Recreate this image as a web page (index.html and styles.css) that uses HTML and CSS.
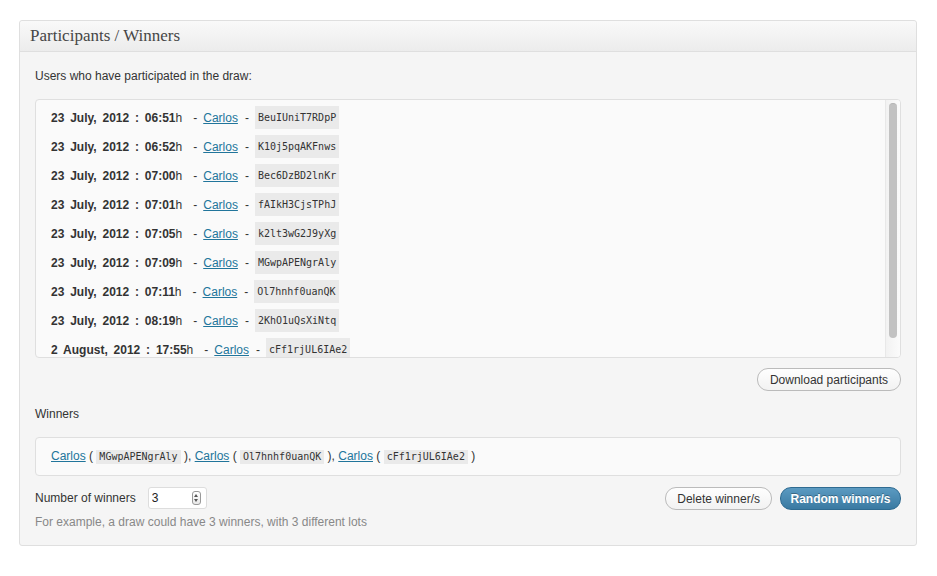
FILE: index.html
```html
<!DOCTYPE html>
<html lang="en">
<head>
    <meta charset="UTF-8">
    <meta name="viewport" content="width=device-width, initial-scale=1.0">
    <title>Participants / Winners</title>
    <link rel="stylesheet" href="styles.css">
</head>
<body>
    <div class="postbox">
        <h3 class="hndle">Participants / Winners</h3>
        <div class="inside">
            <p class="intro">Users who have participated in the draw:</p>

            <!-- participants list, with its own scrollbar -->
            <div class="participants">
                <div class="list">
                    <div class="entry"><strong>23 July, 2012 : 06:51</strong>h<span class="sep">-</span><a href="#">Carlos</a><span class="sep">-</span><code>BeuIUniT7RDpP</code></div>
                    <div class="entry"><strong>23 July, 2012 : 06:52</strong>h<span class="sep">-</span><a href="#">Carlos</a><span class="sep">-</span><code>K10j5pqAKFnws</code></div>
                    <div class="entry"><strong>23 July, 2012 : 07:00</strong>h<span class="sep">-</span><a href="#">Carlos</a><span class="sep">-</span><code>Bec6DzBD2lnKr</code></div>
                    <div class="entry"><strong>23 July, 2012 : 07:01</strong>h<span class="sep">-</span><a href="#">Carlos</a><span class="sep">-</span><code>fAIkH3CjsTPhJ</code></div>
                    <div class="entry"><strong>23 July, 2012 : 07:05</strong>h<span class="sep">-</span><a href="#">Carlos</a><span class="sep">-</span><code>k2lt3wG2J9yXg</code></div>
                    <div class="entry"><strong>23 July, 2012 : 07:09</strong>h<span class="sep">-</span><a href="#">Carlos</a><span class="sep">-</span><code>MGwpAPENgrAly</code></div>
                    <div class="entry"><strong>23 July, 2012 : 07:11</strong>h<span class="sep">-</span><a href="#">Carlos</a><span class="sep">-</span><code>Ol7hnhf0uanQK</code></div>
                    <div class="entry"><strong>23 July, 2012 : 08:19</strong>h<span class="sep">-</span><a href="#">Carlos</a><span class="sep">-</span><code>2KhO1uQsXiNtq</code></div>
                    <div class="entry"><strong>2 August, 2012 : 17:55</strong>h<span class="sep">-</span><a href="#">Carlos</a><span class="sep">-</span><code>cFf1rjUL6IAe2</code></div>
                </div>
                <div class="scrollbar"><div class="thumb"></div></div>
            </div>

            <div class="actions">
                <button type="button" class="button">Download participants</button>
            </div>

            <!-- winners -->
            <p class="label">Winners</p>
            <div class="winners">
                <a href="#">Carlos</a> ( <code>MGwpAPENgrAly</code> ), <a href="#">Carlos</a> ( <code>Ol7hnhf0uanQK</code> ), <a href="#">Carlos</a> ( <code>cFf1rjUL6IAe2</code> )
            </div>

            <div class="draw-row">
                <div class="draw-options">
                    <div class="field">
                        <label for="num_winners">Number of winners</label>
                        <div class="number-box">
                            <input type="text" id="num_winners" name="num_winners" value="3">
                            <span class="spin"><span class="up"></span><span class="down"></span></span>
                        </div>
                    </div>
                    <p class="description">For example, a draw could have 3 winners, with 3 different lots</p>
                </div>
                <div class="buttons">
                    <button type="button" class="button">Delete winner/s</button>
                    <button type="button" class="button button-primary">Random winner/s</button>
                </div>
            </div>
        </div>
    </div>
</body>
</html>
```

FILE: styles.css
```css
body {
    margin: 0;
    padding: 20px 20px 30px 19px;
    background: #ffffff;
    font-family: "Liberation Sans", Arial, sans-serif;
    font-size: 12px;
    color: #333333;
}
.postbox {
    width: 896px;
    border: 1px solid #dfdfdf;
    border-radius: 3px;
    background: #f5f5f5;
}
.hndle {
    margin: 0;
    height: 30px;
    padding: 0 10px;
    line-height: 30px;
    font-family: "Liberation Serif", Georgia, serif;
    font-size: 17px;
    font-weight: normal;
    color: #464646;
    background: linear-gradient(to bottom, #f9f9f9, #ececec);
    border-bottom: 1px solid #dfdfdf;
    border-radius: 3px 3px 0 0;
}
.inside {
    padding: 0 15px 15px 15px;
}
.intro, .label {
    margin: 0;
    line-height: 16px;
}
.intro {
    padding-top: 16px;
}
a {
    color: #21759b;
}
code {
    display: inline-block;
    font-family: "DejaVu Sans Mono", monospace;
    font-size: 10px;
    background: #eaeaea;
    color: #333333;
}
.participants {
    display: flex;
    margin-top: 15px;
    height: 259px;
    box-sizing: border-box;
    border: 1px solid #dfdfdf;
    border-radius: 4px;
    background: #fafafa;
    overflow: hidden;
}
.list {
    flex: 1;
    overflow: hidden;
    padding: 4px 0 0 15px;
}
.scrollbar {
    width: 15px;
    box-sizing: border-box;
    padding: 3px 3px 0 3px;
    border-left: 1px solid #e8e8e8;
    background: linear-gradient(to right, #f2f2f2, #fbfbfb);
}
.thumb {
    height: 234px;
    border-radius: 5px;
    background: #c2c2c2;
    border-top: 1px solid #b5b5b5;
}
.entry {
    height: 29px;
    line-height: 29px;
    white-space: nowrap;
}
.entry strong {
    word-spacing: 2.5px;
}
.sep {
    margin: 0 6px 0 7px;
}
.sep:first-of-type {
    margin-left: 11px;
}
.entry code {
    vertical-align: middle;
    padding: 6px 3px;
    line-height: 11px;
    margin-top: -2px;
}
.actions {
    display: flex;
    justify-content: flex-end;
    margin-top: 10px;
}
.button {
    font-family: "Liberation Sans", Arial, sans-serif;
    font-size: 12px;
    height: 23px;
    padding: 0 12px;
    border: 1px solid #bbbbbb;
    border-radius: 11px;
    color: #333333;
    background: linear-gradient(to bottom, #fefefe, #f2f2f2);
    cursor: pointer;
}
.label {
    margin-top: 15px;
}
.winners {
    margin-top: 15px;
    height: 37px;
    line-height: 37px;
    padding: 0 15px;
    border: 1px solid #dfdfdf;
    border-radius: 4px;
    background: #fafafa;
}
.winners code {
    padding: 1px 3px;
    line-height: 12px;
}
.draw-row {
    display: flex;
    justify-content: space-between;
    align-items: flex-start;
    margin-top: 11px;
}
.field {
    display: flex;
    align-items: center;
    gap: 12px;
}
.number-box {
    display: flex;
    align-items: center;
    width: 57px;
    height: 20px;
    border: 1px solid #dddddd;
    border-radius: 3px;
    background: #ffffff;
}
.number-box input {
    width: 40px;
    border: none;
    outline: none;
    padding: 0 0 0 3px;
    font-family: "Liberation Sans", Arial, sans-serif;
    font-size: 12px;
    color: #222222;
    background: transparent;
}
.spin {
    display: flex;
    flex-direction: column;
    align-items: center;
    justify-content: center;
    gap: 2px;
    width: 7px;
    height: 12px;
    border: 1px solid #999999;
    border-radius: 3px;
    background: linear-gradient(to bottom, #ffffff, #e8e8e8);
}
.spin .up, .spin .down {
    width: 0;
    height: 0;
    border-left: 2px solid transparent;
    border-right: 2px solid transparent;
}
.spin .up {
    border-bottom: 3px solid #555555;
}
.spin .down {
    border-top: 3px solid #555555;
}
.description {
    margin: 5px 0 0 0;
    color: #888888;
    line-height: 16px;
}
.buttons {
    display: flex;
    gap: 8px;
}
.buttons .button {
    padding: 0 11px;
}
.buttons .button-primary {
    font-weight: bold;
    color: #ffffff;
    border-color: #2f6b91;
    background: linear-gradient(to bottom, #5b9ac1, #3a7aa2);
    text-shadow: 0 -1px 0 rgba(0, 0, 0, 0.3);
    padding: 0 9.5px;
}
```
